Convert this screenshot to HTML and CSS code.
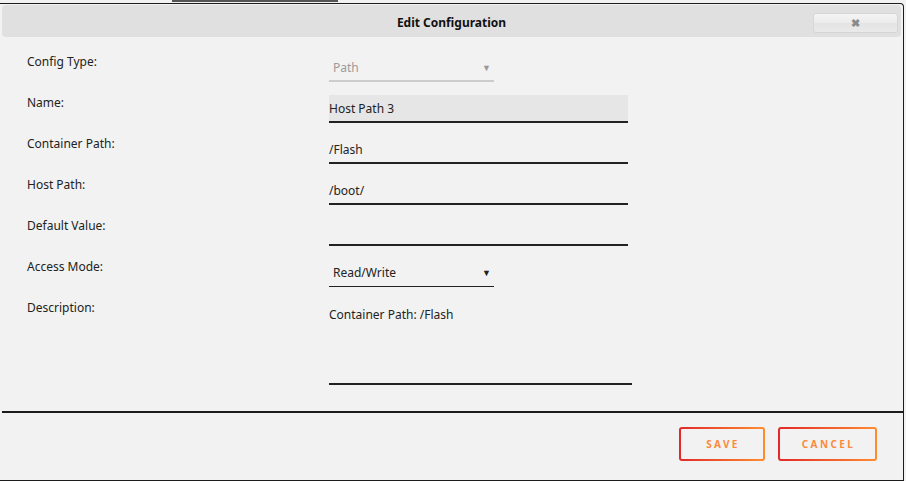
FILE: index.html
```html
<!DOCTYPE html>
<html lang="en">
<head>
	<meta charset="UTF-8">
	<title>Edit Configuration</title>
	<link rel="stylesheet" href="styles.css">
</head>
<body>
<div class="topstrip"><div class="tabmark"></div></div>
<div class="dialog">
	<div class="titlebar">
		<span class="title">Edit Configuration</span>
		<button class="close">&#10006;</button>
	</div>

	<div class="form">
		<div class="row">
			<div class="label">Config Type:</div>
			<div class="select disabled"><span>Path</span><span class="arrow">&#9660;</span></div>
		</div>
		<div class="row">
			<div class="label">Name:</div>
			<div class="input filled">Host Path 3</div>
		</div>
		<div class="row">
			<div class="label">Container Path:</div>
			<div class="input">/Flash</div>
		</div>
		<div class="row">
			<div class="label">Host Path:</div>
			<div class="input">/boot/</div>
		</div>
		<div class="row">
			<div class="label">Default Value:</div>
			<div class="input"></div>
		</div>
		<div class="row">
			<div class="label">Access Mode:</div>
			<div class="select"><span>Read/Write</span><span class="arrow">&#9660;</span></div>
		</div>
		<div class="row">
			<div class="label">Description:</div>
			<div class="textarea">Container Path: /Flash</div>
		</div>
	</div>

	<div class="footer">
		<button class="btn save">SAVE</button>
		<button class="btn cancel">CANCEL</button>
	</div>
</div>
</body>
</html>
```

FILE: styles.css
```css
html, body {
	margin: 0;
	background-color: #f2f2f2;
	font-family: "Noto Sans", "Open Sans", sans-serif;
	font-size: 12px;
	color: #222222;
}
.topstrip {
	height: 3px;
}
.tabmark {
	margin-left: 172px;
	width: 166px;
	height: 2px;
	background-color: #555555;
}
.dialog {
	height: 476px;
	width: 903px;
	border-top: 1px solid #1c1c1c;
	border-right: 1px solid #1c1c1c;
	border-bottom: 1px solid #1c1c1c;
	border-top-right-radius: 4px;
	background-color: #f2f2f2;
	display: flex;
	flex-direction: column;
}
.titlebar {
	margin: 1px 2px 0 2px;
	height: 32px;
	background-color: #e0e0e0;
	border-radius: 4px;
	display: flex;
	align-items: center;
	justify-content: center;
	position: relative;
}
.title {
	font-weight: bold;
	font-size: 12px;
	color: #111111;
	padding-top: 2px;
}
.close {
	position: absolute;
	right: 3px;
	top: 8px;
	width: 85px;
	height: 20px;
	border: 1px solid #d6d6d6;
	border-radius: 3px;
	background: linear-gradient(#f5f5f5, #ebebeb 50%, #e4e4e4 51%, #e9e9e9);
	color: #8a8a8a;
	font-size: 11px;
	font-weight: bold;
	padding: 0;
	line-height: 18px;
}
.form {
	padding: 17px 0 0 27px;
	display: flex;
	flex-direction: column;
	gap: 13px;
}
.row {
	display: flex;
}
.label {
	width: 302px;
	line-height: 16px;
}
.input {
	width: 299px;
	height: 26px;
	line-height: 28px;
	border-bottom: 2px solid #222222;
}
.input.filled {
	background-color: #e6e6e6;
	line-height: 27px;
}
.select {
	width: 161px;
	height: 27px;
	padding: 0 0 0 4px;
	line-height: 28px;
	border-bottom: 1px solid #222222;
	display: flex;
	justify-content: space-between;
}
.select.disabled {
	color: #9a9a9a;
	border-bottom: 2px solid #cccccc;
	height: 26px;
	line-height: 27px;
}
.arrow {
	font-size: 9px;
	padding-right: 3px;
}
.textarea {
	width: 303px;
	height: 83px;
	line-height: 29px;
	border-bottom: 2px solid #222222;
}
.footer {
	margin: 26px 0 0 2px;
	border-top: 2px solid #1c1c1c;
	padding: 14px 26px 0 0;
	display: flex;
	justify-content: flex-end;
	gap: 13px;
}
.btn {
	height: 34px;
	padding: 0;
	border: 2px solid transparent;
	border-radius: 3px;
	background: linear-gradient(#f2f2f2, #f2f2f2) padding-box, linear-gradient(90deg, #e22828, #ff8d30) border-box;
	color: #fb8a3c;
	font-family: "Noto Sans", sans-serif;
	font-size: 10px;
	font-weight: bold;
	letter-spacing: 2.4px;
	text-indent: 2px;
}
.save {
	width: 86px;
}
.cancel {
	width: 99px;
}
```
